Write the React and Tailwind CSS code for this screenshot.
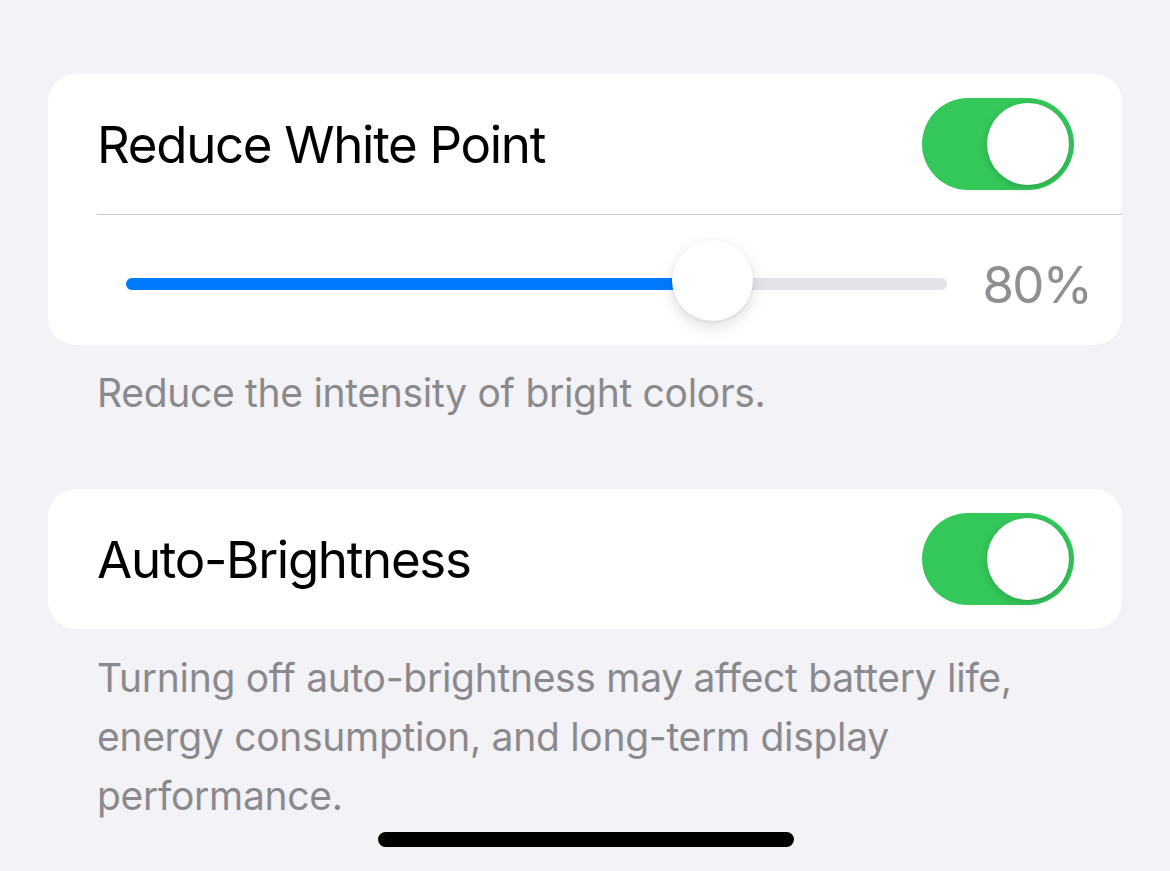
import React from "react";

const Toggle = () => (
  <div className="relative w-[152px] h-[92px] rounded-full bg-[#34c759] shrink-0">
    <div className="absolute right-[5px] top-[5px] w-[82px] h-[82px] rounded-full bg-white shadow-[0_3px_8px_rgba(0,0,0,0.15),0_1px_1px_rgba(0,0,0,0.06)]" />
  </div>
);

const App = () => {
  return (
    <div
      className="relative min-h-[871px] bg-[#f2f2f7] px-[48px] pt-[74px]"
      style={{ fontFamily: "Inter, 'Noto Sans', sans-serif" }}
    >
      <div className="bg-white rounded-[28px]">
        <div className="flex items-center justify-between h-[140px] pl-[49px] pr-[48px]">
          <span className="text-[51px] text-black tracking-[-1.3px] leading-none">
            Reduce White Point
          </span>
          <Toggle />
        </div>
        <div className="ml-[49px] h-px bg-[#c8c8cc]" />
        <div className="flex items-center h-[130px] pt-[8px] pl-[78px] pr-[31px]">
          <div className="relative flex-1 h-[12px] rounded-full bg-[#e3e3e8]">
            <div className="absolute left-0 top-0 h-[12px] w-[73%] rounded-full bg-[#007aff]" />
            <div className="absolute left-[546px] top-[-38px] w-[81px] h-[81px] rounded-full bg-white shadow-[0_6px_16px_rgba(0,0,0,0.13),0_1px_3px_rgba(0,0,0,0.08)]" />
          </div>
          <span className="ml-[36px] text-[51px] text-[#8e8e93] leading-none tracking-[-1.8px]">
            80%
          </span>
        </div>
      </div>

      <p className="px-[49px] pt-[18px] text-[39px] leading-[59px] text-[#8a8a8e] tracking-[-0.3px]">
        Reduce the intensity of bright colors.
      </p>

      <div className="mt-[67px] bg-white rounded-[28px]">
        <div className="flex items-center justify-between h-[140px] pl-[49px] pr-[48px]">
          <span className="text-[51px] text-black tracking-[-1.3px] leading-none">
            Auto-Brightness
          </span>
          <Toggle />
        </div>
      </div>

      <p className="pl-[49px] pr-[48px] pt-[19px] text-[39px] leading-[59px] text-[#8a8a8e] tracking-[-0.3px]">
        Turning off auto-brightness may affect battery life, energy consumption, and long-term display performance.
      </p>

      <div className="absolute left-[378px] bottom-[24px] w-[416px] h-[15px] rounded-full bg-black" />
    </div>
  );
};

export default App;
